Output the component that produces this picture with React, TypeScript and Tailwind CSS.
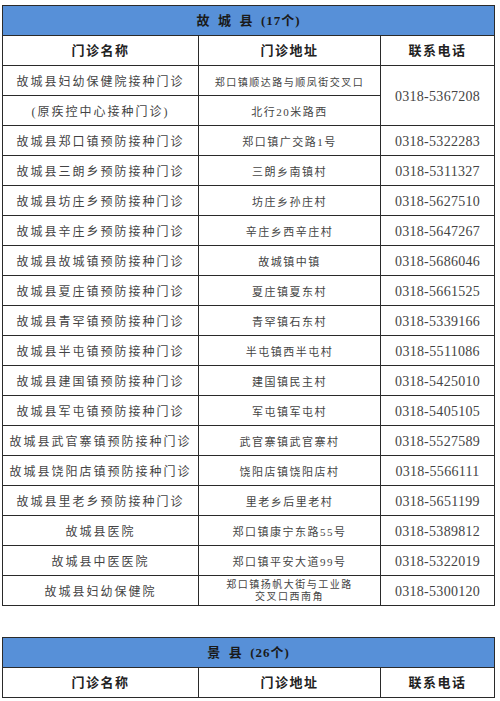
const font = { fontFamily: '"Liberation Serif", "Noto Sans CJK SC", serif' };

type Row = { name: string; addr: string; phone: string };

const rows: Row[] = [
  { name: '故城县郑口镇预防接种门诊', addr: '郑口镇广交路1号', phone: '0318-5322283' },
  { name: '故城县三朗乡预防接种门诊', addr: '三朗乡南镇村', phone: '0318-5311327' },
  { name: '故城县坊庄乡预防接种门诊', addr: '坊庄乡孙庄村', phone: '0318-5627510' },
  { name: '故城县辛庄乡预防接种门诊', addr: '辛庄乡西辛庄村', phone: '0318-5647267' },
  { name: '故城县故城镇预防接种门诊', addr: '故城镇中镇', phone: '0318-5686046' },
  { name: '故城县夏庄镇预防接种门诊', addr: '夏庄镇夏东村', phone: '0318-5661525' },
  { name: '故城县青罕镇预防接种门诊', addr: '青罕镇石东村', phone: '0318-5339166' },
  { name: '故城县半屯镇预防接种门诊', addr: '半屯镇西半屯村', phone: '0318-5511086' },
  { name: '故城县建国镇预防接种门诊', addr: '建国镇民主村', phone: '0318-5425010' },
  { name: '故城县军屯镇预防接种门诊', addr: '军屯镇军屯村', phone: '0318-5405105' },
  { name: '故城县武官寨镇预防接种门诊', addr: '武官寨镇武官寨村', phone: '0318-5527589' },
  { name: '故城县饶阳店镇预防接种门诊', addr: '饶阳店镇饶阳店村', phone: '0318-5566111' },
  { name: '故城县里老乡预防接种门诊', addr: '里老乡后里老村', phone: '0318-5651199' },
  { name: '故城县医院', addr: '郑口镇康宁东路55号', phone: '0318-5389812' },
  { name: '故城县中医医院', addr: '郑口镇平安大道99号', phone: '0318-5322019' },
];

const cell = 'border border-[#2a2a2a] text-center align-middle p-0';
const nameText = 'text-[12px] tracking-[2px] text-[#444]';
const addrText = 'text-[11px] tracking-[1.5px] text-[#444]';
const phoneText = 'text-[14px] tracking-[0.3px] text-[#444]';

function Header({ title }: { title: string }) {
  return (
    <>
      <tr className="h-[30px]">
        <td colSpan={3} className={`${cell} bg-[#5790d8] text-[13px] font-bold tracking-[1px] text-[#1a1a1a]`}>
          {title}
        </td>
      </tr>
      <tr className="h-[30px]">
        <td className={`${cell} text-[13px] font-bold tracking-[1.5px] text-[#222]`}>门诊名称</td>
        <td className={`${cell} text-[13px] font-bold tracking-[1.5px] text-[#222]`}>门诊地址</td>
        <td className={`${cell} text-[13px] font-bold tracking-[1.5px] text-[#222]`}>联系电话</td>
      </tr>
    </>
  );
}

function Cols() {
  return (
    <colgroup>
      <col className="w-[196px]" />
      <col className="w-[182px]" />
      <col className="w-[114px]" />
    </colgroup>
  );
}

export default function App() {
  return (
    <div className="w-[500px] h-[701px] bg-white overflow-hidden pt-[5px] pl-[2px]" style={font}>
      <table className="w-[492px] border-collapse table-fixed">
        <Cols />
        <tbody>
          <Header title={'故\u2002城\u2002县\u2002(17个)'} />
          <tr className="h-[30px]">
            <td className={cell}><span className={nameText}>故城县妇幼保健院接种门诊</span></td>
            <td className={cell}><span className="text-[10px] tracking-[1.5px] text-[#444]">郑口镇顺达路与顺凤街交叉口</span></td>
            <td rowSpan={2} className={cell}><span className={phoneText}>0318-5367208</span></td>
          </tr>
          <tr className="h-[30px]">
            <td className={cell}><span className={nameText}>(原疾控中心接种门诊)</span></td>
            <td className={cell}><span className={addrText}>北行20米路西</span></td>
          </tr>
          {rows.map((r) => (
            <tr key={r.name} className="h-[30px]">
              <td className={cell}><span className={nameText}>{r.name}</span></td>
              <td className={cell}><span className={addrText}>{r.addr}</span></td>
              <td className={cell}><span className={phoneText}>{r.phone}</span></td>
            </tr>
          ))}
          <tr className="h-[30px]">
            <td className={cell}><span className={nameText}>故城县妇幼保健院</span></td>
            <td className={cell}>
              <div className="text-[10px] leading-[12px] tracking-[1.5px] text-[#444]">
                郑口镇扬帆大街与工业路
                <br />
                交叉口西南角
              </div>
            </td>
            <td className={cell}><span className={phoneText}>0318-5300120</span></td>
          </tr>
        </tbody>
      </table>

      <table className="w-[492px] border-collapse table-fixed mt-[31px]">
        <Cols />
        <tbody>
          <Header title={'景\u2002县\u2002(26个)'} />
        </tbody>
      </table>
    </div>
  );
}
